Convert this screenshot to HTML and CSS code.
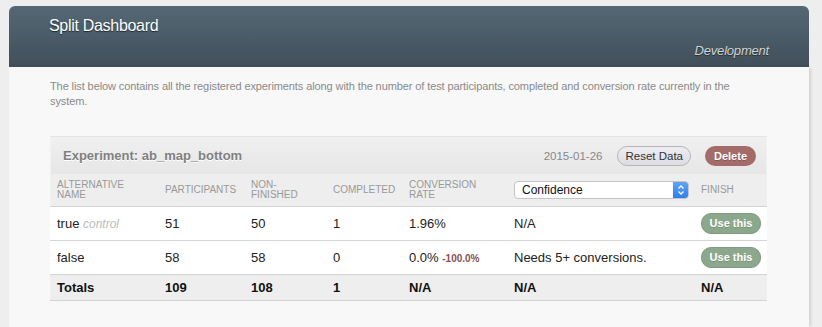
FILE: index.html
```html
<!DOCTYPE html>
<html lang="en">
<head>
  <meta charset="UTF-8" />
  <title>Split Dashboard</title>
  <link rel="stylesheet" href="styles.css">
</head>
<body>
  <div class="page">
    <header class="top">
      <h1>Split Dashboard</h1>
      <p class="env">Development</p>
    </header>

    <main class="content">
      <p class="intro">The list below contains all the registered experiments along with the number of test participants, completed and conversion rate currently in the system.</p>

      <section class="experiment">
        <div class="experiment-head">
          <h2>Experiment: ab_map_bottom</h2>
          <div class="actions">
            <span class="date">2015-01-26</span>
            <button class="btn reset">Reset Data</button>
            <button class="btn delete">Delete</button>
          </div>
        </div>

        <table>
          <colgroup>
            <col class="c-name">
            <col class="c-part">
            <col class="c-non">
            <col class="c-comp">
            <col class="c-rate">
            <col class="c-conf">
            <col class="c-fin">
          </colgroup>
          <thead>
            <tr>
              <th>Alternative<br>name</th>
              <th>Participants</th>
              <th>Non-<br>finished</th>
              <th>Completed</th>
              <th>Conversion<br>rate</th>
              <th>
                <div class="select">
                  <span>Confidence</span>
                  <span class="arrows">
                    <svg width="8" height="12" viewBox="0 0 8 12"><path d="M1.5 4.5 L4 2 L6.5 4.5 M1.5 7.5 L4 10 L6.5 7.5" fill="none" stroke="#fff" stroke-width="1.3"/></svg>
                  </span>
                </div>
              </th>
              <th>Finish</th>
            </tr>
          </thead>
          <tbody>
            <tr>
              <td>true <em class="control">control</em></td>
              <td>51</td>
              <td>50</td>
              <td>1</td>
              <td>1.96%</td>
              <td>N/A</td>
              <td><button class="btn use">Use this</button></td>
            </tr>
            <tr>
              <td>false</td>
              <td>58</td>
              <td>58</td>
              <td>0</td>
              <td>0.0% <span class="diff">-100.0%</span></td>
              <td>Needs 5+ conversions.</td>
              <td><button class="btn use">Use this</button></td>
            </tr>
            <tr class="totals">
              <td>Totals</td>
              <td>109</td>
              <td>108</td>
              <td>1</td>
              <td>N/A</td>
              <td>N/A</td>
              <td>N/A</td>
            </tr>
          </tbody>
        </table>
      </section>
    </main>
  </div>
</body>
</html>
```

FILE: styles.css
```css
* {
  box-sizing: border-box;
}

body {
  margin: 0;
  padding: 6px 9px 0 9px;
  background-color: #eeeeee;
  font-family: 'Liberation Sans', Arial, sans-serif;
  width: 822px;
  height: 327px;
  overflow: hidden;
}

.page {
  width: 800px;
}

.top {
  height: 61px;
  padding: 11px 40px 0 40px;
  border-radius: 6px 6px 0 0;
  background: linear-gradient(to bottom, #546874, #414f5a);
}

.top h1 {
  margin: 0;
  font-size: 16px;
  line-height: 18px;
  font-weight: normal;
  letter-spacing: -0.3px;
  color: #fff;
  text-shadow: 0 1px 1px rgba(0, 0, 0, 0.6);
}

.env {
  margin: 8px 0 0 0;
  text-align: right;
  font-size: 13px;
  line-height: 15px;
  font-style: italic;
  letter-spacing: -0.2px;
  color: #d0d5d8;
  text-shadow: 0 1px 1px rgba(0, 0, 0, 0.5);
}

.content {
  background-color: #f8f8f8;
  padding: 12px 42px 30px 41px;
  height: 260px;
  box-shadow: 3px 0 3px -1px rgba(0, 0, 0, 0.12);
}

.intro {
  margin: 0 0 27px 0;
  font-size: 11px;
  line-height: 15px;
  color: #8a8a8a;
  letter-spacing: -0.1px;
}

.experiment {
  border-top: 1px solid #e4e4e4;
}

.experiment-head {
  height: 37px;
  display: flex;
  align-items: center;
  justify-content: space-between;
  padding: 0 10px 0 12px;
  background: linear-gradient(to bottom, #f0f0f0, #e6e6e6);
  border-left: 1px solid #f2f2f2;
  border-right: 1px solid #f2f2f2;
}

.experiment-head h2 {
  margin: 0;
  font-size: 13px;
  font-weight: bold;
  color: #808080;
  text-shadow: 0 1px 0 #fff;
}

.actions {
  display: flex;
  align-items: center;
}

.date {
  font-size: 11.5px;
  color: #888;
  margin-right: 15px;
}

.btn {
  font-family: 'Liberation Sans', Arial, sans-serif;
  border-radius: 10px;
  cursor: pointer;
}

.reset {
  height: 20px;
  padding: 0 7px;
  font-size: 11.5px;
  color: #333;
  background: linear-gradient(to bottom, #eeeef2, #dcdce2);
  border: 1px solid #b5b5bb;
  margin-right: 14px;
}

.delete {
  height: 20px;
  width: 51px;
  padding: 0;
  font-size: 11px;
  font-weight: bold;
  color: #fff;
  background-color: #a46c69;
  border: none;
  text-shadow: 0 1px 0 rgba(0, 0, 0, 0.2);
}

table {
  width: 717px;
  border-collapse: collapse;
  table-layout: fixed;
  background-color: #fff;
}

.c-name { width: 108px; }
.c-part { width: 86px; }
.c-non { width: 82px; }
.c-comp { width: 76px; }
.c-rate { width: 105px; }
.c-conf { width: 187px; }
.c-fin { width: 73px; }

th {
  background-color: #eeeeee;
  height: 32px;
  padding: 0 0 0 7px;
  text-align: left;
  font-size: 10px;
  font-weight: normal;
  line-height: 10px;
  text-transform: uppercase;
  color: #999;
  border-bottom: 1px solid #d4d4d4;
}

td {
  height: 34px;
  padding: 0 0 0 7px;
  font-size: 13px;
  color: #222;
  border-bottom: 1px solid #d4d4d4;
}

.control {
  color: #bbb;
  font-size: 12px;
}

.diff {
  font-size: 10px;
  font-weight: bold;
  color: #8a5050;
}

.select {
  width: 175px;
  height: 18px;
  display: flex;
  align-items: center;
  justify-content: space-between;
  background-color: #fff;
  border: 1px solid #c4c4c4;
  border-radius: 4px;
  overflow: hidden;
  text-transform: none;
  font-size: 12px;
  color: #111;
  padding-left: 7px;
}

.arrows {
  width: 15px;
  height: 100%;
  display: flex;
  align-items: center;
  justify-content: center;
  background: linear-gradient(to bottom, #5ea3f6, #2f80ec);
}

.use {
  height: 21px;
  width: 60px;
  padding: 0;
  font-size: 11px;
  font-weight: bold;
  color: #fff;
  background-color: #8ba88c;
  border: 1px solid #7f9a80;
  text-shadow: 0 1px 0 rgba(0, 0, 0, 0.15);
}

.totals td {
  height: 26px;
  background-color: #eeeeee;
  font-weight: bold;
  color: #111;
}
```
